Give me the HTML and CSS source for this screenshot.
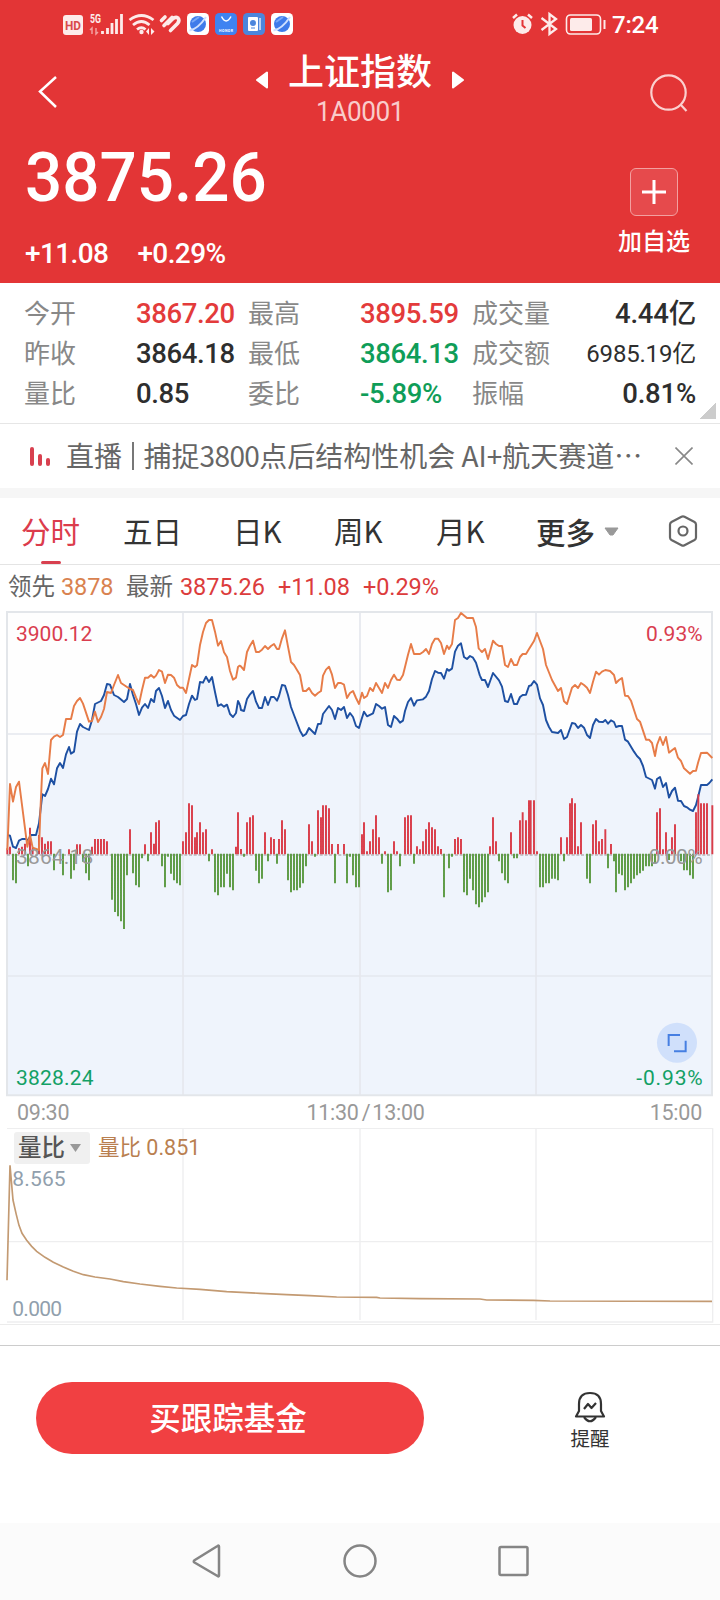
FILE: index.html
```html
<!DOCTYPE html>
<html lang="zh-CN">
<head>
<meta charset="utf-8">
<title>上证指数</title>
<link rel="stylesheet" href="styles.css">
</head>
<body>
<header class="header">
  <div class="status">
    <svg class="status-left" viewBox="60 0 236 48" width="236" height="48">
      <rect x="63" y="15" width="20" height="20" rx="3" fill="#fdebea"/>
      <text x="65" y="29.500" class="hd" textLength="16" lengthAdjust="spacingAndGlyphs">HD</text>
      <text x="90" y="23" class="g5" textLength="11" lengthAdjust="spacingAndGlyphs">5G</text>
      <path d="M92 34V28l-2 2M96 28v6l2-2" stroke="#f3a09f" stroke-width="1.500" fill="none"/>
      <path d="M102.500 34v-3M107.500 34v-6M112 34v-11M116.500 34v-15M121.500 34V14" stroke="#fdebea" stroke-width="2.800"/>
      <g fill="none" stroke="#fdebea" stroke-width="2.800"><path d="M129.500 20q12-9 24 0M133 25q8.500-7 16.500 0M137 29.500q4.500-3.500 8.500 0"/></g>
      <circle cx="141.500" cy="32" r="2.200" fill="#fdebea"/>
      <path d="M149 28v7l-3-3.500zM151 28v7l3.500-3.500z" fill="#fdebea"/>
      <g fill="none" stroke="#fdebea" stroke-width="3.600" stroke-linecap="round"><path d="M161.500 20.500l3.500-3.500M164 25.500l8-8M170.500 30.500l7-7q2.500-3 .500-5.500-2.500-1.500-5.500 1l-4.500 4.500"/></g>
      <g id="planet"><rect x="187" y="13" width="22" height="22" rx="4.500" fill="#fff"/><circle cx="198" cy="24" r="8" fill="#3f7bea"/><path d="M189.500 30.500Q198 29 206 17" stroke="#cfe0ff" stroke-width="2" fill="none"/><path d="M192 22l7-5" stroke="#79a8f7" stroke-width="2"/></g>
      <rect x="215" y="13" width="22" height="22" rx="4.500" fill="#3f83f1"/><path d="M221.500 16.500q4.500 9 9.500 0" stroke="#fff" stroke-width="1.500" fill="none"/>
      <text x="219" y="32" class="honor" textLength="14">HONOR</text>
      <rect x="243" y="13" width="22" height="22" rx="4.500" fill="#4c86dc"/><rect x="248" y="17" width="10" height="14" rx="1" fill="#fff"/><path d="M260 18v12" stroke="#dce9fb" stroke-width="1.500"/><circle cx="253" cy="23" r="3" fill="#4c86dc"/><path d="M251 28h4" stroke="#4c86dc"/>
      <use href="#planet" x="84"/>
    </svg>
    <div class="status-right">
      <svg viewBox="510 0 96 48" width="96" height="48" fill="none" stroke="#fdebea">
        <circle cx="522.500" cy="25" r="9" fill="#fdebea" stroke="none"/><path d="M513 18l4-3.500M532 18l-4-3.500" stroke-width="2.500"/><path d="M522.500 20v5.500l3 2.500" stroke="#e33536" stroke-width="2"/>
        <path d="M541.500 18l14.500 11-6.500 5V14l6.500 5-14.500 11" stroke-width="2.300"/>
        <rect x="566.500" y="15" width="34" height="19" rx="4" stroke-width="1.600"/><rect x="570" y="18" width="22" height="13" rx="1.500" fill="#fdebea" stroke="none"/><path d="M604.500 20v9" stroke-width="2"/>
      </svg>
      <span class="clock">7:24</span>
    </div>
  </div>
  <nav class="nav">
    <svg class="back" viewBox="0 0 20 34" width="20" height="34"><path d="M18 2L2 16.500 18 32" fill="none" stroke="#fff" stroke-width="2.500"/></svg>
    <div class="title-wrap">
      <div class="title-row">
        <svg width="12" height="18" viewBox="0 0 12 18"><path d="M11 1.500v15L1 9z" fill="#fff" stroke="#fff" stroke-width="2" stroke-linejoin="round"/></svg>
        <h1 class="title">上证指数</h1>
        <svg width="12" height="18" viewBox="0 0 12 18"><path d="M1 1.500v15L11 9z" fill="#fff" stroke="#fff" stroke-width="2" stroke-linejoin="round"/></svg>
      </div>
      <div class="code">1A0001</div>
    </div>
    <svg class="search" viewBox="0 0 38 38" width="38" height="38" fill="none" stroke="#fbd0cf" stroke-width="2.200"><circle cx="18.500" cy="18.500" r="17.200"/><path d="M30.500 30.500l6 6.500"/></svg>
  </nav>
  <div class="quote">
    <div class="quote-main">
      <div class="price">3875.26</div>
      <div class="changes"><span>+11.08</span><span>+0.29%</span></div>
    </div>
    <div class="add">
      <div class="add-box"><svg width="24" height="24" viewBox="0 0 24 24"><path d="M12 0v24M0 12h24" stroke="#fff" stroke-width="3"/></svg></div>
      <span>加自选</span>
    </div>
  </div>
</header>

<section class="stats">
  <span class="lb">今开</span><b class="up">3867.20</b><span class="lb">最高</span><b class="up">3895.59</b><span class="lb">成交量</span><b class="end">4.44亿</b>
  <span class="lb">昨收</span><b>3864.18</b><span class="lb">最低</span><b class="down">3864.13</b><span class="lb">成交额</span><b class="end small">6985.19亿</b>
  <span class="lb">量比</span><b>0.85</b><span class="lb">委比</span><b class="down">-5.89%</b><span class="lb">振幅</span><b class="end">0.81%</b>
  <i class="corner"></i>
</section>

<section class="notice">
  <div class="live"><i class="l1"></i><i class="l2"></i><i class="l3"></i></div>
  <span class="notice-tag">直播</span><i class="bar"></i>
  <span class="notice-text">捕捉<em>3800</em>点后结构性机会 AI+航天赛道<em>⋯</em></span>
  <svg width="18" height="18" viewBox="0 0 18 18"><path d="M.500.500l17 17M17.500.500l-17 17" stroke="#888" stroke-width="1.600"/></svg>
</section>

<nav class="tabs">
  <span class="tab active">分时</span><span class="tab">五日</span><span class="tab">日K</span><span class="tab">周K</span><span class="tab">月K</span>
  <span class="tab more">更多<svg width="15" height="9" viewBox="0 0 15 9"><path d="M1 1h13L9 8H6z" fill="#999" stroke="#999" stroke-linejoin="round"/></svg></span>
  <svg width="30" height="32" viewBox="0 0 30 32" fill="none" stroke="#666" stroke-width="2.200"><path d="M13.500 1.800q1.500-.800 3 0l10 5.200q1.500.900 1.500 2.500v13q0 1.600-1.500 2.500l-10 5.200q-1.500.800-3 0L3.500 25Q2 24.100 2 22.500v-13Q2 7.900 3.500 7z"/><circle cx="15" cy="16" r="4.500"/></svg>
</nav>

<div class="info"><span>领先</span><b class="lead">3878</b><span>最新</span><b>3875.26</b><b>+11.08</b><b>+0.29%</b></div>

<svg class="chart" viewBox="0 0 2160 1479" width="720" height="493">
  <rect x="21" y="21" width="2115" height="1450" fill="#fefefe"/>
  <g class="area">
    <path d="M22 1471V690L30 692 39 725 48 729 57 707 66 702 78 702 84 706 93 690 108 690 117 655 127 568 135 573 144 552 153 521 162 538 171 490 180 474 189 489 198 448 207 426 213 446 222 440 231 380 240 357 249 366 267 375 276 345 285 297 303 288 312 270 321 237 330 239 342 270 354 276 372 291 381 282 390 237 399 270 408 297 417 330 426 308 435 297 444 309 453 282 462 291 468 258 477 249 486 273 495 309 504 288 513 315 522 332 540 345 549 333 558 330 567 297 576 272 585 285 591 282 600 231 609 233 618 215 627 231 636 216 645 261 654 303 663 298 672 305 681 299 690 327 699 336 708 324 714 288 720 300V1471z"/>
    <path transform="translate(720)" d="M0 1471V300L3 315 12 318 21 282 30 268 39 258 48 290 57 309 66 309 75 276 84 300 93 276 102 276 111 287 117 273 126 240 135 242 144 270 153 306 162 330 180 377 189 393 198 387 207 369 216 378 225 387 234 357 243 356 249 327 258 315 267 303 276 315 285 342 294 309 303 315 312 306 321 339 330 324 339 336 348 363 357 369 364 345 372 320 381 334 399 325 408 297 417 303 426 311 435 306 444 360 453 366 462 333 471 341 480 353 489 347 495 318 504 291 513 279 522 302 531 286 549 283 558 275 567 258 576 222 585 198 594 203 603 204 612 221 621 192 627 197 636 191 645 140 654 122 663 115 672 156 681 162 690 153 699 158 708 173 720 213V1471z"/>
    <path transform="translate(1440)" d="M0 1471V213L6 225 15 225 24 246 39 204 57 226 66 245 75 288 84 291 93 267 102 297 111 297 120 276 128 270 138 269 147 243 153 241 162 228 171 239 180 280 189 300 198 345 207 366 216 381 234 384 243 375 252 402 261 396 276 354 285 356 294 369 303 360 312 368 321 390 330 399 339 360 348 342 357 350 369 351 376 345 384 356 393 346 402 351 408 366 417 363 426 363 435 404 444 410 462 440 471 453 480 462 489 483 498 516 516 525 525 551 531 522 540 516 549 546 558 534 567 578 576 558 585 548 594 587 603 588 612 603 621 607 630 614 639 618 648 600 655 573 663 540 681 540 688 534 697 523V1471z"/>
  </g>
  <path class="grid" d="M549 21V1471M1080 21V1471M1608 21V1471M21 387H2136M21 1113H2136"/>
  <path class="frame" d="M21 21H2136V1471H21z"/>
  <path class="zero" d="M21 750H2136"/>
  <g class="line blue">
    <path d="M22 690L30 692 39 725 48 729 57 707 66 702 78 702 84 706 93 690 108 690 117 655 127 568 135 573 144 552 153 521 162 538 171 490 180 474 189 489 198 448 207 426 213 446 222 440 231 380 240 357 249 366 267 375 276 345 285 297 303 288 312 270 321 237 330 239 342 270 354 276 372 291 381 282 390 237 399 270 408 297 417 330 426 308 435 297 444 309 453 282 462 291 468 258 477 249 486 273 495 309 504 288 513 315 522 332 540 345 549 333 558 330 567 297 576 272 585 285 591 282 600 231 609 233 618 215 627 231 636 216 645 261 654 303 663 298 672 305 681 299 690 327 699 336 708 324 714 288 720 300"/>
    <path transform="translate(720)" d="M0 300L3 315 12 318 21 282 30 268 39 258 48 290 57 309 66 309 75 276 84 300 93 276 102 276 111 287 117 273 126 240 135 242 144 270 153 306 162 330 180 377 189 393 198 387 207 369 216 378 225 387 234 357 243 356 249 327 258 315 267 303 276 315 285 342 294 309 303 315 312 306 321 339 330 324 339 336 348 363 357 369 364 345 372 320 381 334 399 325 408 297 417 303 426 311 435 306 444 360 453 366 462 333 471 341 480 353 489 347 495 318 504 291 513 279 522 302 531 286 549 283 558 275 567 258 576 222 585 198 594 203 603 204 612 221 621 192 627 197 636 191 645 140 654 122 663 115 672 156 681 162 690 153 699 158 708 173 720 213"/>
    <path transform="translate(1440)" d="M0 213L6 225 15 225 24 246 39 204 57 226 66 245 75 288 84 291 93 267 102 297 111 297 120 276 128 270 138 269 147 243 153 241 162 228 171 239 180 280 189 300 198 345 207 366 216 381 234 384 243 375 252 402 261 396 276 354 285 356 294 369 303 360 312 368 321 390 330 399 339 360 348 342 357 350 369 351 376 345 384 356 393 346 402 351 408 366 417 363 426 363 435 404 444 410 462 440 471 453 480 462 489 483 498 516 516 525 525 551 531 522 540 516 549 546 558 534 567 578 576 558 585 548 594 587 603 588 612 603 621 607 630 614 639 618 648 600 655 573 663 540 681 540 688 534 697 523"/>
  </g>
  <g class="bars red">
    <path d="M22 748V730M30 748V725M57 748V730M66 748V725M75 748V716M90 748V668M98 748V728M117 748V690M126 748V697M135 748V716M144 748V709M153 748V709M207 748V733M231 748V718M240 748V718M276 748V725M285 748V702M294 748V702M303 748V702M312 748V702M321 748V709M390 748V673M435 748V718M453 748V682M462 748V716M468 748V652M477 748V646M549 748V709M558 748V682M567 748V595M576 748V601M585 748V697M591 748V682M600 748V652M609 748V682M618 748V673M636 748V733M708 748V725M714 748V622"/>
    <path transform="translate(720)" d="M3 748V732M21 748V652M30 748V637M39 748V631M75 748V682M93 748V697M102 748V702M117 748V702M126 748V646M135 748V673M207 748V658M216 748V709M234 748V616M243 748V637M249 748V601M258 748V601M267 748V610M276 748V717M294 748V717M312 748V717M366 748V688M372 748V652M381 748V739M390 748V709M399 748V673M408 748V631M417 748V697M435 748V739M462 748V709M471 748V739M495 748V637M504 748V631M513 748V631M531 748V724M540 748V733M549 748V709M558 748V673M567 748V652M576 748V667M585 748V673M594 748V724M603 748V732M645 748V702M654 748V697M663 748V702"/>
    <path transform="translate(1440)" d="M30 748V724M39 748V637M48 748V709M93 748V682M120 748V646M128 748V622M138 748V646M147 748V586M152 748V586M162 748V586M171 748V739M243 748V697M261 748V697M270 748V595M276 748V580M285 748V595M294 748V724M303 748V652M339 748V658M348 748V646M357 748V709M366 748V702M376 748V673M393 748V717M531 748V622M540 748V610M549 748V733M558 748V682M576 748V697M585 748V658M648 748V622M655 748V568M663 748V595M672 748V595M681 748V595M697 748V601"/>
  </g>
  <g class="bars green">
    <path d="M39 746V826M48 746V835M84 746V784M162 746V796M189 746V811M213 746V821M222 746V796M249 746V770M258 746V805M267 746V826M336 746V884M345 746V921M354 746V934M363 746V949M372 746V972M381 746V811M399 746V805M408 746V841M417 746V847M426 746V760M444 746V769M486 746V784M495 746V847M504 746V755M513 746V806M522 746V826M531 746V835M540 746V841M627 746V769M645 746V862M654 746V871M663 746V847M672 746V847M681 746V806M690 746V847M699 746V856"/>
    <path transform="translate(720)" d="M12 746V755M48 746V797M57 746V835M66 746V821M84 746V769M111 746V776M144 746V826M153 746V862M162 746V856M171 746V856M180 746V848M189 746V835M198 746V784M225 746V755M285 746V835M321 746V835M330 746V755M339 746V811M348 746V847M357 746V847M426 746V776M444 746V862M453 746V856M480 746V784M522 746V776M612 746V877M627 746V790M636 746V755M672 746V862M681 746V871M690 746V821M699 746V856M708 746V898M717 746V907"/>
    <path transform="translate(1440)" d="M6 746V892M15 746V877M24 746V862M57 746V769M66 746V805M75 746V826M84 746V835M102 746V760M111 746V760M180 746V847M189 746V847M198 746V835M207 746V835M216 746V821M225 746V821M234 746V826M252 746V769M321 746V821M330 746V835M384 746V790M402 746V769M408 746V862M417 746V806M426 746V811M435 746V856M444 746V847M453 746V835M462 746V821M471 746V811M480 746V805M489 746V797M498 746V784M507 746V784M516 746V784M525 746V777M567 746V765M603 746V769M612 746V796M621 746V796M630 746V811M639 746V821"/>
  </g>
  <g class="line orange">
    <path d="M22 735L30 537 39 590 48 546 57 530 66 600 75 670 82 725 90 690 98 728 117 735 121 620 127 490 135 474 144 507 153 405 162 395 171 390 180 396 189 390 198 342 213 342 222 303 231 288 240 279 249 296 258 323 267 350 276 348 285 320 294 351 303 336 312 312 321 261 333 264 342 240 354 210 363 234 372 240 390 252 399 255 408 277 417 297 426 255 435 218 444 218 453 210 462 218 468 212 477 195 486 200 495 234 504 209 513 210 522 218 531 240 540 248 549 248 558 264 567 222 576 180 585 186 591 181 600 120 609 81 618 54 627 45 636 45 645 80 654 122 663 108 672 142 681 156 690 198 699 224 708 218 714 186 720 181"/>
    <path transform="translate(720)" d="M0 181L12 195 21 141 30 122 39 107 48 141 57 141 66 134 75 123 84 132 93 123 102 117 111 132 117 132 126 100 135 76 144 125 153 171 162 180 180 210 189 258 198 258 207 249 216 264 225 272 234 264 243 258 249 212 258 194 267 185 276 209 285 249 294 234 303 234 312 239 321 279 330 264 339 258 348 279 357 297 366 263 372 279 381 273 390 249 399 258 408 234 417 249 426 264 435 234 444 249 453 225 462 209 471 224 480 225 489 210 495 186 504 149 513 117 522 147 540 147 549 141 558 132 567 147 576 117 585 101 594 101 603 114 612 147 621 122 627 132 636 117 645 45 654 39 663 24 681 39 699 39 708 66 716 130 720 135"/>
    <path transform="translate(1440)" d="M0 135L6 141 15 132 24 162 39 107 48 117 57 123 66 123 75 180 84 186 93 162 102 180 111 180 120 156 128 147 138 147 147 132 162 108 171 84 180 108 189 132 198 180 216 225 234 258 243 249 252 289 261 297 276 248 285 240 294 249 303 234 312 240 321 248 330 264 339 230 348 200 357 209 366 200 376 195 390 198 402 210 408 234 417 225 426 219 435 272 444 273 453 287 462 315 471 342 480 350 498 404 507 404 516 414 525 453 531 420 540 396 549 420 558 396 567 443 576 436 585 429 594 458 603 468 612 490 621 498 630 506 639 498 648 497 655 470 663 444 681 443 697 459"/>
  </g>
  <text class="cl c-red" x="48" y="107" textLength="229">3900.12</text>
  <text class="cl c-red" x="1938" y="107" textLength="170">0.93%</text>
  <text class="cl c-gray" x="48" y="776" textLength="232">3864.18</text>
  <text class="cl c-gray" x="1946" y="776" textLength="162">0.00%</text>
  <text class="cl c-green" x="48" y="1440" textLength="233">3828.24</text>
  <text class="cl c-green" x="1909" y="1440" textLength="199">-0.93%</text>
  <circle cx="2031" cy="1313" r="60" fill="#d0e0fb"/>
  <path d="M2006 1323V1290H2040M2057 1307V1339H2022" fill="none" stroke="#467fe2" stroke-width="6"/>
</svg>

<div class="axis"><span>09:30</span><span class="mid">11:30<i>/</i>13:00</span><span>15:00</span></div>

<div class="sub">
  <svg viewBox="0 294 2160 588" width="720" height="196">
    <path class="grid thin" d="M549 294V870M1080 294V870M1608 294V870M21 635H2136M21 295H2138V876H21"/>
    <path d="M21 751L30 406 39 510 48 550 57 586 66 610 80 631 95 649 110 664 135 682 160 697 190 711 220 724 250 734 285 741 330 747 370 755 420 762 480 769 530 774 600 778 680 785 780 790 860 794 930 797 1010 801 1130 802 1140 804 1260 806 1440 807 1460 810 1600 811 1650 813 2136 814" fill="none" stroke="#c39a72" stroke-width="5"/>
    <text class="cl c-slate" x="37" y="467" textLength="160">8.565</text>
    <text class="cl c-slate" x="37" y="857" textLength="149">0.000</text>
  </svg>
  <div class="sub-head"><span class="chip">量比<svg width="11" height="8" viewBox="0 0 11 8"><path d="M0 0h11L5.500 8z" fill="#999"/></svg></span><span class="ratio">量比 <b>0.851</b></span></div>
</div>

<section class="actions">
  <button class="buy">买跟踪基金</button>
  <div class="remind">
    <svg width="32" height="32" viewBox="0 0 32 32" fill="none" stroke="#333" stroke-width="2.200" stroke-linejoin="round"><path d="M5 20V13Q5 2 16 2T27 13V20L30 25.500H2z"/><path d="M10 26q6 8.500 12 0"/><path d="M10 18l4-5 3.500 4 4.500-5"/></svg>
    <span>提醒</span>
  </div>
</section>

<nav class="sysnav">
  <svg width="30" height="34" viewBox="0 0 30 34"><path d="M27 2.500v29q0 1.500-1.500.500L2.500 18.500q-1.500-1 0-2.200L25.500 2q1.500-1 1.500.500z"/></svg>
  <svg width="34" height="34" viewBox="0 0 34 34"><circle cx="17" cy="17" r="15.500"/></svg>
  <svg width="32" height="32" viewBox="0 0 32 32"><rect x="1.500" y="2" width="28" height="28" rx="1.500"/></svg>
</nav>
</body>
</html>
```

FILE: styles.css
```css
* { box-sizing: border-box; }
body { margin: 0; width: 720px; height: 1600px; overflow: hidden; background: #fff; color: #2e2e2e; font-family: Roboto, "Noto Sans CJK SC", sans-serif; }
svg { display: block; flex: none; }
b { font-weight: 400; }
i, em { font-style: normal; }

.header { height: 283px; background: #e33536; color: #fff; }
.status { display: flex; justify-content: space-between; height: 48px; padding: 0 62px 0 60px; }
.status-right { display: flex; align-items: center; gap: 6px; }
.clock { width: 46px; font-size: 24px; line-height: 48px; padding-top: 2px; letter-spacing: -.200px; font-weight: 500; }
.hd { font: 700 13px Roboto, sans-serif; fill: #d94a4b; }
.g5 { font: 700 12px Roboto, sans-serif; fill: #fdebea; }
.honor { font: 700 3.500px Roboto, sans-serif; fill: #fff; }

.nav { display: flex; justify-content: space-between; height: 84px; padding: 0 32px 0 38px; }
.back { margin-top: 27px; }
.title-wrap { width: 208px; margin-left: 12px; }
.title-row { display: flex; align-items: center; justify-content: space-between; height: 46px; }
.title-row svg { margin-top: 18px; }
.title { margin: -5px 0 0; font: 500 36px/46px "Noto Sans CJK SC", sans-serif; }
.code { height: 36px; font-size: 27px; line-height: 36px; letter-spacing: -.500px; text-align: center; color: #f9cccb; transform: scaleX(.97); }
.search { margin-top: 26px; }

.quote { display: flex; justify-content: space-between; padding: 0 29px 0 25px; }
.price { margin-top: 4px; height: 84px; font-size: 69px; line-height: 84px; font-weight: 500; letter-spacing: 0; transform: scaleX(.95); transform-origin: 0 50%; }
.changes { display: flex; gap: 29px; margin-top: 16px; font-size: 28px; line-height: 36px; font-weight: 500; letter-spacing: -.600px; }
.add { display: flex; flex-direction: column; align-items: center; width: 74px; padding-top: 36px; font: 500 24px/36px "Noto Sans CJK SC", sans-serif; }
.add-box { display: flex; align-items: center; justify-content: center; width: 48px; height: 48px; margin-bottom: 6px; border: 1px solid #f3a0a0; border-radius: 6px; background: #e64a4c; }

.stats { position: relative; display: grid; grid-template-columns: 112px 112px 112px 112px 88px 136px; grid-auto-rows: 40px; height: 141px; padding: 11px 24px 0; border-bottom: 1px solid #e6e6e6; font-size: 27.500px; line-height: 40px; white-space: nowrap; }
.stats b { font-weight: 500; letter-spacing: -.400px; }
.stats .end { letter-spacing: -.200px; }
.stats .small { font-size: 24px; font-weight: 400; }
.lb { font-size: 26px; color: #888; }
.up { color: #e33b3b; }
.down { color: #0f9d58; }
.end { text-align: right; }
.corner { position: absolute; right: 4px; bottom: 4px; width: 16px; height: 16px; background: linear-gradient(135deg, transparent 50%, #ccc 50%); }

.notice { display: flex; align-items: center; height: 64px; padding: 0 27px 0 30px; color: #666; font: 28px/62px "Noto Sans CJK SC", sans-serif; white-space: nowrap; }
.live { display: flex; align-items: flex-end; justify-content: space-between; width: 20px; height: 20px; margin-right: 16px; }
.live i { width: 4px; border-radius: 2px; background: #d8404f; }
.l1 { height: 19px; }
.l2 { height: 12px; }
.l3 { height: 8px; }
.notice-tag, .notice-text { height: 64px; }
.bar { width: 1.500px; height: 28px; margin: 0 10px; background: #777; }
.notice-text { flex: 1; }
.notice-text em { letter-spacing: -.600px; }

.tabs { display: grid; grid-template-columns: 102px 110px 101px 102px 100px 132px auto; align-items: center; height: 77px; padding: 0 0 0 21px; border-top: 10px solid #f6f6f6; border-bottom: 1px solid #e4e4e4; color: #333; font: 29.500px/64px "Noto Sans CJK SC", sans-serif; }
.tab { position: relative; height: 66px; }
.active { color: #dc3c4c; }
.active::after { content: ""; position: absolute; left: 20px; bottom: 0; width: 20px; height: 3px; border-radius: 2px; background: #d8404f; }
.more { display: flex; align-items: center; gap: 9px; font-weight: 500; }

.info { display: grid; grid-template-columns: 53px 65px 54px 98px 85px auto; height: 40px; padding: 2px 0 0 8px; font-size: 23.500px; line-height: 40px; color: #666; white-space: nowrap; }
.info b { color: #dc3c3c; letter-spacing: -.100px; }
.info .lead { color: #d98250; }

.area { fill: #eff4fc; }
.grid { fill: none; stroke: #e5e8ee; stroke-width: 5; }
.thin { stroke: #eeeeef; stroke-width: 4; }
.frame { fill: none; stroke: #e3e6ea; stroke-width: 6; }
.zero { stroke: #999; stroke-width: 3; stroke-dasharray: 9 5; }
.line { fill: none; stroke-width: 5.800; stroke-linejoin: round; }
.blue { stroke: #1e50a2; }
.orange { stroke: #e77c48; }
.bars { stroke-width: 5.800; fill: none; }
.red { stroke: #d93d4a; }
.green { stroke: #5d9b45; }
.cl { font: 63px Roboto, sans-serif; }
.c-red { fill: #d93d4f; }
.c-gray { fill: #999; }
.c-green { fill: #12a065; }
.c-slate { fill: #919fad; }

.axis { display: grid; grid-template-columns: 1fr auto 1fr; height: 30px; padding: 0 18px 0 17px; font-size: 21.500px; line-height: 30px; letter-spacing: -.250px; color: #999; }
.axis span:last-child { text-align: right; }
.mid { margin-left: 12px; }
.mid i { margin: 0 2px 0 3px; }

.sub { position: relative; height: 197px; border-bottom: 1px solid #ececec; }
.sub-head { position: absolute; left: 14px; top: 4px; display: flex; gap: 8px; align-items: center; height: 32px; line-height: 34px; }
.chip { display: flex; align-items: center; gap: 5px; width: 76px; height: 32px; padding-left: 4px; border-radius: 3px; background: #f0f0f0; color: #555; font-size: 23.500px; font-weight: 500; }
.ratio { font-size: 21.500px; color: #b97f50; }

.actions { display: flex; align-items: flex-start; height: 178px; margin-top: 20px; padding: 36px 0 0 36px; border-top: 1px solid #ccc; }
.buy { width: 388px; height: 72px; padding: 0 4px 3px 0; border: 0; border-radius: 36px; background: #f14042; color: #fff; font: 500 31.500px/69px "Noto Sans CJK SC", sans-serif; }
.remind { display: flex; flex-direction: column; align-items: center; width: 60px; margin: 9px 0 0 136px; font: 19.500px/28px "Noto Sans CJK SC", sans-serif; color: #333; }
.remind span { margin-top: 1px; }

.sysnav { display: flex; align-items: center; gap: 121px; height: 77px; padding: 0 0 1px 192px; background: #fbfbfb; }
.sysnav svg { fill: none; stroke: #858585; stroke-width: 2.500; }
```
